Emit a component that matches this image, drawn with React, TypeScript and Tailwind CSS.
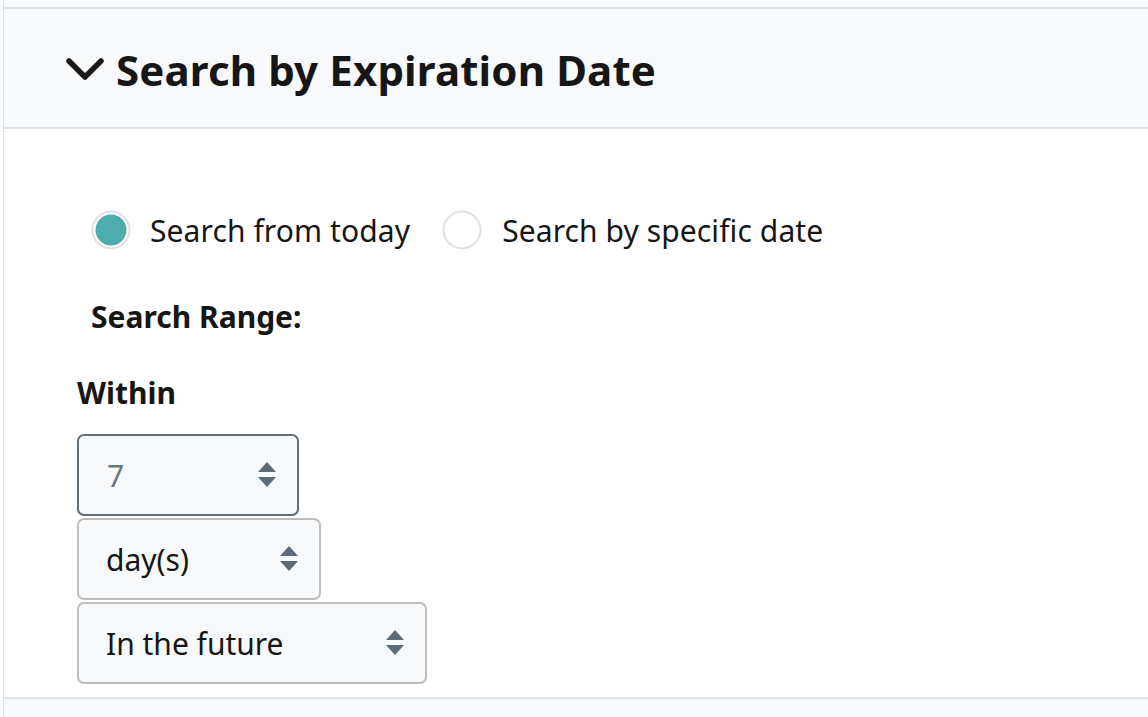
import React from "react";

function Arrows() {
  return (
    <svg width="18" height="26" viewBox="0 0 18 26" className="shrink-0">
      <polygon points="9,0 18,10 0,10" fill="#5c6b77" />
      <polygon points="0,15 18,15 9,25" fill="#5c6b77" />
    </svg>
  );
}

function Radio({ checked }: { checked: boolean }) {
  return (
    <svg width="40" height="40" viewBox="0 0 40 40" className="shrink-0">
      <circle cx="20" cy="20" r="18.5" fill="#ffffff" stroke="#dee2e6" strokeWidth="2" />
      {checked && <circle cx="20" cy="20" r="15.5" fill="#4eacac" />}
    </svg>
  );
}

export default function App() {
  const font = { fontFamily: '"Noto Sans", "Open Sans", sans-serif' };
  return (
    <div className="w-[1148px] h-[717px] overflow-hidden bg-white text-[#212529]" style={font}>
      {/* top strip */}
      <div className="bg-[#f8f9fa] h-[7px] pl-[3px]">
        <div className="h-full border-l border-[#dee2e6]" />
      </div>
      {/* header */}
      <div className="bg-[#f8f9fa] pl-[3px]">
        <div className="border-l border-t-2 border-b-2 border-[#dee2e6] h-[122px] flex items-center pl-[61px] pt-[3px]">
          <svg width="40" height="28" viewBox="0 0 40 28" className="shrink-0">
            <polyline points="4,5 20,21 36,5" fill="none" stroke="#1a1a1a" strokeWidth="5.5" strokeLinecap="round" strokeLinejoin="round" />
          </svg>
          <h3 className="ml-[11px] text-[42px] font-bold text-[#161616] leading-none tracking-[0.15px]">
            Search by Expiration Date
          </h3>
        </div>
      </div>
      {/* body */}
      <div className="bg-white pl-[3px]">
        <div className="border-l border-[#dee2e6] h-[568px] pl-[73px] pt-[81px]">
          <div className="flex items-center ml-[14px] h-[40px] text-[30px] text-[#161616]">
            <Radio checked={true} />
            <span className="ml-[19px] tracking-[0.1px]">Search from today</span>
            <span className="ml-[32px]"><Radio checked={false} /></span>
            <span className="ml-[20px] tracking-[0.1px]">Search by specific date</span>
          </div>
          <div className="ml-[14px] mt-[47px] text-[30px] font-bold text-[#161616] leading-[40px]">Search Range:</div>
          <div className="mt-[36px] text-[30px] font-bold text-[#161616] leading-[40px]">Within</div>
          <div className="mt-[21px] flex flex-col gap-[2px] text-[30px]">
            <div className="w-[222px] h-[82px] rounded-[7px] border-2 border-[#5f6e79] bg-[#f8f9fa] flex items-center justify-between pl-[28px] pr-[21px]">
              <span className="text-[#6c757d]">7</span>
              <Arrows />
            </div>
            <div className="w-[244px] h-[82px] rounded-[7px] border-2 border-[#bdbdbd] bg-[#f8f9fa] flex items-center justify-between pl-[27px] pr-[21px]">
              <span className="text-[#161616]">day(s)</span>
              <Arrows />
            </div>
            <div className="w-[350px] h-[82px] rounded-[7px] border-2 border-[#bdbdbd] bg-[#f8f9fa] flex items-center justify-between pl-[27px] pr-[21px]">
              <span className="text-[#161616]">In the future</span>
              <Arrows />
            </div>
          </div>
        </div>
      </div>
      {/* footer */}
      <div className="bg-[#f8f9fa] pl-[3px]">
        <div className="border-l border-t-2 border-[#dee2e6] h-[20px]" />
      </div>
    </div>
  );
}
